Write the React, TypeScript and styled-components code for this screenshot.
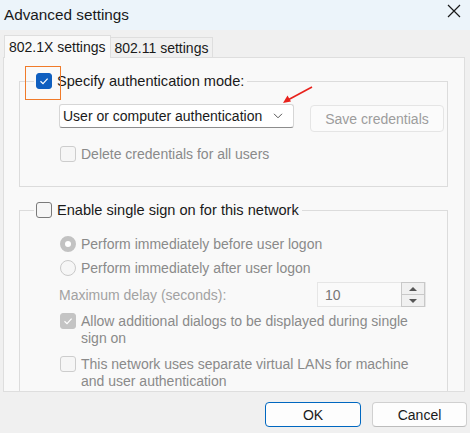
import React from "react";
import styled, { createGlobalStyle } from "styled-components";

const GlobalStyle = createGlobalStyle`
  html, body { margin: 0; padding: 0; }
  body {
    font-family: "Liberation Sans", Arial, sans-serif;
    background: #f0f0f0;
    color: #1a1a1a;
  }
  * { box-sizing: border-box; }
`;

const Window = styled.div`
  position: relative;
  width: 470px;
  height: 433px;
  background: #f0f0f0;
  overflow: hidden;
  display: flex;
  flex-direction: column;
  font-size: 14px;
`;

const TitleBar = styled.div`
  height: 30px;
  flex: none;
  background: #ecf4fa;
  display: flex;
  align-items: center;
  justify-content: space-between;
  padding: 0 9px 0 4px;
  font-size: 15.3px;
  color: #1a1a1a;
`;

const CloseIcon = styled.svg`
  width: 14px;
  height: 14px;
  margin-top: -8px;
`;

const TabRow = styled.div`
  display: flex;
  align-items: flex-end;
  padding: 5px 0 0 4px;
  height: 28px;
  margin-bottom: -1px;
  position: relative;
  z-index: 1;
`;

const Tab = styled.div<{ $active?: boolean }>`
  height: ${(p) => (p.$active ? 23 : 21)}px;
  padding: 0 4px;
  display: flex;
  align-items: center;
  border: 1px solid #dedede;
  border-bottom: ${(p) => (p.$active ? "none" : "1px solid #dedede")};
  border-left: ${(p) => (p.$active ? "1px solid #dedede" : "none")};
  background: ${(p) => (p.$active ? "#f9f9f9" : "#f0f0f0")};
  color: #1a1a1a;
  white-space: nowrap;
`;

const Panel = styled.div`
  margin: 0 5px 0 3px;
  height: 335px;
  flex: none;
  border: 1px solid #dedede;
  background: #f9f9f9;
  padding: 14px 16px 0 15px;
  overflow: hidden;
`;

const Group = styled.fieldset<{ $gap?: number }>`
  margin: ${(p) => p.$gap ?? 0}px 0 0 0;
  padding: 0 0 24px 14px;
  border: 1px solid #dcdcdc;
  min-width: 0;
`;

const Legend = styled.legend`
  padding: 0 3px 0 2px;
  height: 18px;
  display: flex;
  align-items: center;
  gap: 5px;
  font-size: 14.6px;
  color: #1a1a1a;
  white-space: nowrap;
`;

const Row = styled.div<{ $top: number }>`
  display: flex;
  align-items: flex-start;
  margin: ${(p) => p.$top}px 0 0 25px;
`;

const OptionRow = styled.div<{ $top: number }>`
  display: flex;
  align-items: flex-start;
  gap: 5px;
  margin: ${(p) => p.$top}px 0 0 26px;
  color: #8a8a8a;
  line-height: 16px;
  white-space: nowrap;
`;

const TwoLines = styled.span`
  display: flex;
  flex-direction: column;
  gap: 1px;
`;

const Box = styled.span<{ $state: "on" | "off" | "dimOn" | "dimOff" }>`
  flex: none;
  width: 16px;
  height: 16px;
  border-radius: 3px;
  display: inline-flex;
  align-items: center;
  justify-content: center;
  background: ${(p) =>
    p.$state === "on" ? "#0f5fc0" : p.$state === "dimOn" ? "#c4c4c4" : "#f6f6f6"};
  border: 1px solid
    ${(p) =>
      p.$state === "on"
        ? "#0f5fc0"
        : p.$state === "dimOn"
        ? "#c4c4c4"
        : p.$state === "off"
        ? "#7a7a7a"
        : "#cdcdcd"};
`;

const Radio = styled.span<{ $checked?: boolean }>`
  flex: none;
  width: 16px;
  height: 16px;
  border-radius: 50%;
  background: ${(p) => (p.$checked ? "#fff" : "#f6f6f6")};
  border: ${(p) => (p.$checked ? "5px solid #c2c2c2" : "1px solid #c9c9c9")};
`;

const Select = styled.div`
  width: 235px;
  height: 24px;
  background: #fff;
  border: 1px solid #d6d6d6;
  border-bottom-color: #8c8c8c;
  border-radius: 3px;
  display: flex;
  align-items: center;
  justify-content: space-between;
  padding: 0 10px 0 3px;
  color: #1a1a1a;
  white-space: nowrap;
`;

const GhostButton = styled.div`
  width: 134px;
  height: 27px;
  margin: 1px 0 0 16px;
  background: #fbfbfb;
  border: 1px solid #e5e5e5;
  border-radius: 4px;
  display: flex;
  align-items: center;
  justify-content: center;
  color: #9d9d9d;
  white-space: nowrap;
`;

const DelayRow = styled.div`
  width: 367px;
  margin: 6px 0 0 25px;
  display: flex;
  align-items: center;
  justify-content: space-between;
  color: #a2a2a2;
`;

const Spin = styled.div`
  width: 109px;
  height: 25px;
  background: #fafafa;
  border: 1px solid #e6e6e6;
  display: flex;
  align-items: center;
  justify-content: space-between;
  padding: 0 0 0 7px;
  color: #777777;
`;

const SpinButtons = styled.div`
  width: 24px;
  height: 25px;
  display: flex;
  flex-direction: column;
  border: 1px solid #c8c8c8;
  background: #f0f0f0;
`;

const SpinHalf = styled.div<{ $up?: boolean }>`
  flex: 1;
  display: flex;
  align-items: center;
  justify-content: center;
  border-top: ${(p) => (p.$up ? "none" : "1px solid #c8c8c8")};
  &::after {
    content: "";
    border-left: 4px solid transparent;
    border-right: 4px solid transparent;
    ${(p) => (p.$up ? "border-bottom: 4px solid #555;" : "border-top: 4px solid #555;")}
  }
`;

const Footer = styled.div`
  display: flex;
  justify-content: flex-end;
  gap: 11px;
  padding: 10px 3px 0 0;
`;

const DialogButton = styled.div<{ $primary?: boolean }>`
  width: ${(p) => (p.$primary ? 96 : 95)}px;
  height: 25px;
  background: #fdfdfd;
  border: 1px solid ${(p) => (p.$primary ? "#0067c0" : "#d0d0d0")};
  border-bottom-color: ${(p) => (p.$primary ? "#0067c0" : "#bcbcbc")};
  border-radius: 4px;
  display: flex;
  align-items: center;
  justify-content: center;
  color: #1a1a1a;
`;

const Highlight = styled.div`
  position: absolute;
  left: 25px;
  top: 66px;
  width: 36px;
  height: 34px;
  border: 1.5px solid #f07b2a;
  pointer-events: none;
`;

const Arrow = styled.svg`
  position: absolute;
  left: 280px;
  top: 84px;
  width: 36px;
  height: 22px;
  pointer-events: none;
`;

const Check = ({ color }: { color: string }) => (
  <svg width="10" height="10" viewBox="0 0 10 10">
    <path d="M1.5 5.2 L4 7.6 L8.6 2.6" fill="none" stroke={color} strokeWidth="1.2" />
  </svg>
);

export default function App() {
  return (
    <Window>
      <GlobalStyle />
      <TitleBar>
        <span>Advanced settings</span>
        <CloseIcon viewBox="0 0 14 14">
          <path d="M1 1 L13 13 M13 1 L1 13" stroke="#1a1a1a" strokeWidth="1.2" />
        </CloseIcon>
      </TitleBar>

      <TabRow>
        <Tab $active>802.1X settings</Tab>
        <Tab>802.11 settings</Tab>
      </TabRow>

      <Panel>
        <Group>
          <Legend>
            <Box $state="on">
              <Check color="#ffffff" />
            </Box>
            Specify authentication mode:
          </Legend>
          <Row $top={14}>
            <Select>
              User or computer authentication
              <svg width="10" height="6" viewBox="0 0 10 6">
                <path d="M1 0.8 L5 4.8 L9 0.8" fill="none" stroke="#555" strokeWidth="1" />
              </svg>
            </Select>
            <GhostButton>Save credentials</GhostButton>
          </Row>
          <OptionRow $top={14}>
            <Box $state="dimOff" />
            Delete credentials for all users
          </OptionRow>
        </Group>

        <Group $gap={14}>
          <Legend>
            <Box $state="off" />
            Enable single sign on for this network
          </Legend>
          <OptionRow $top={17}>
            <Radio $checked />
            Perform immediately before user logon
          </OptionRow>
          <OptionRow $top={8}>
            <Radio />
            Perform immediately after user logon
          </OptionRow>
          <DelayRow>
            Maximum delay (seconds):
            <Spin>
              10
              <SpinButtons>
                <SpinHalf $up />
                <SpinHalf />
              </SpinButtons>
            </Spin>
          </DelayRow>
          <OptionRow $top={6}>
            <Box $state="dimOn">
              <Check color="#ffffff" />
            </Box>
            <TwoLines>
              <span>Allow additional dialogs to be displayed during single</span>
              <span>sign on</span>
            </TwoLines>
          </OptionRow>
          <OptionRow $top={10}>
            <Box $state="dimOff" />
            <TwoLines>
              <span>This network uses separate virtual LANs for machine</span>
              <span>and user authentication</span>
            </TwoLines>
          </OptionRow>
        </Group>
      </Panel>

      <Footer>
        <DialogButton $primary>OK</DialogButton>
        <DialogButton>Cancel</DialogButton>
      </Footer>

      <Highlight />
      <Arrow viewBox="0 0 36 22">
        <path d="M32 3 L6 17" stroke="#e8221c" strokeWidth="1.6" />
        <path d="M3 19 L7.5 11.5 L11 17.5 Z" fill="#e8221c" />
      </Arrow>
    </Window>
  );
}
